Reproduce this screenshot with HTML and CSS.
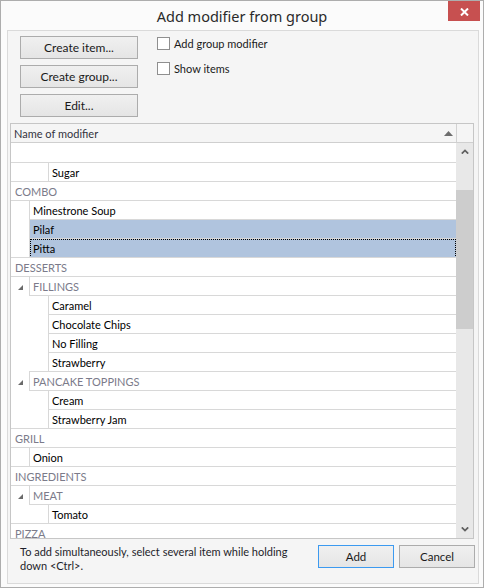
FILE: index.html
```html
<!DOCTYPE html>
<html>
<head>
<meta charset="utf-8">
<title>Add modifier from group</title>
<link rel="stylesheet" href="styles.css">
</head>
<body>
<div class="window">
  <div class="titlebar">
    <span></span>
    <div class="title">Add modifier from group</div>
    <div class="close"><svg width="9" height="8" viewBox="0 0 9 8"><path d="M1 0.5 L8 7.5 M8 0.5 L1 7.5" stroke="#fff" stroke-width="2"/></svg></div>
  </div>
  <div class="panel">
    <div class="top">
      <div class="btns">
        <button class="btn">Create item...</button>
        <button class="btn">Create group...</button>
        <button class="btn">Edit...</button>
      </div>
      <div class="checks">
        <label class="chk"><span class="box"></span><span>Add group modifier</span></label>
        <label class="chk"><span class="box"></span><span>Show items</span></label>
      </div>
    </div>
    <div class="grid">
      <div class="ghead">
        <div class="hcell"><span>Name of modifier</span><svg class="sort" width="9" height="5" viewBox="0 0 9 5"><polygon points="4.5,0 9,5 0,5" fill="#6d6d6d"/></svg></div>
        <div class="hcorner"></div>
      </div>
      <div class="gbody">
        <div class="rows">
          <div class="row first"><div class="cell"></div></div>
          <div class="row"><div class="ind l2"></div><div class="cell">Sugar</div></div>
          <div class="row"><div class="cell grp">COMBO</div></div>
          <div class="row"><div class="ind l1"></div><div class="cell">Minestrone Soup</div></div>
          <div class="row"><div class="ind l1"></div><div class="cell sel">Pilaf</div></div>
          <div class="row"><div class="ind l1"></div><div class="cell sel focus">Pitta</div></div>
          <div class="row"><div class="cell grp">DESSERTS</div></div>
          <div class="row"><div class="ind l1 exp"><svg width="5" height="5" viewBox="0 0 5 5"><polygon points="5,0 5,5 0,5" fill="#6a6a6a"/></svg></div><div class="cell grp">FILLINGS</div></div>
          <div class="row"><div class="ind l2"></div><div class="cell">Caramel</div></div>
          <div class="row"><div class="ind l2"></div><div class="cell">Chocolate Chips</div></div>
          <div class="row"><div class="ind l2"></div><div class="cell">No Filling</div></div>
          <div class="row"><div class="ind l2"></div><div class="cell">Strawberry</div></div>
          <div class="row"><div class="ind l1 exp"><svg width="5" height="5" viewBox="0 0 5 5"><polygon points="5,0 5,5 0,5" fill="#6a6a6a"/></svg></div><div class="cell grp">PANCAKE TOPPINGS</div></div>
          <div class="row"><div class="ind l2"></div><div class="cell">Cream</div></div>
          <div class="row"><div class="ind l2"></div><div class="cell">Strawberry Jam</div></div>
          <div class="row"><div class="cell grp">GRILL</div></div>
          <div class="row"><div class="ind l1"></div><div class="cell">Onion</div></div>
          <div class="row"><div class="cell grp">INGREDIENTS</div></div>
          <div class="row"><div class="ind l1 exp"><svg width="5" height="5" viewBox="0 0 5 5"><polygon points="5,0 5,5 0,5" fill="#6a6a6a"/></svg></div><div class="cell grp">MEAT</div></div>
          <div class="row"><div class="ind l2"></div><div class="cell">Tomato</div></div>
          <div class="row"><div class="cell grp">PIZZA</div></div>
        </div>
        <div class="vscroll">
          <div class="arrow"><svg width="8" height="5" viewBox="0 0 8 5"><polyline points="0.8,4.6 4,1.4 7.2,4.6" fill="none" stroke="#606060" stroke-width="1.8"/></svg></div>
          <div class="track-top"></div>
          <div class="thumb"></div>
          <div class="track-rest"></div>
          <div class="arrow"><svg width="8" height="5" viewBox="0 0 8 5"><polyline points="0.8,0.4 4,3.6 7.2,0.4" fill="none" stroke="#606060" stroke-width="1.8"/></svg></div>
        </div>
      </div>
    </div>
    <div class="bottom">
      <div class="hint">To add simultaneously, select several item while holding<br>down &lt;Ctrl&gt;.</div>
      <div class="actions">
        <button class="btn dlg default">Add</button>
        <button class="btn dlg">Cancel</button>
      </div>
    </div>
  </div>
</div>
</body>
</html>
```

FILE: styles.css
```css
html, body {
  margin: 0;
  padding: 0;
  background: #ffffff;
}

body {
  font-family: Lato, "Noto Sans", sans-serif;
  font-size: 11px;
  color: #1a1a1a;
}

.window {
  width: 484px;
  height: 588px;
  box-sizing: border-box;
  border: 1px solid #adadad;
  background: #fbfbfb;
  display: flex;
  flex-direction: column;
}

.titlebar {
  flex: none;
  height: 29px;
  display: grid;
  grid-template-columns: 1fr auto 1fr;
  align-items: start;
}

.title {
  font-family: "Noto Sans", sans-serif;
  font-size: 14.5px;
  line-height: 31px;
  color: #2a2a2a;
  white-space: nowrap;
}

.close {
  justify-self: end;
  width: 32px;
  height: 20px;
  margin-right: 3px;
  background: #c75050;
  display: flex;
  align-items: center;
  justify-content: center;
}

.close svg {
  display: block;
  margin-top: 1px;
}

.panel {
  flex: 1;
  min-height: 0;
  margin: 0 4px 3px 6px;
  border: 1px solid #dadada;
  background: #f5f5f5;
  padding: 5px 4px 0 2px;
  display: flex;
  flex-direction: column;
}

.top {
  display: flex;
  padding-left: 10px;
  margin-bottom: 6px;
}

.btns {
  display: flex;
  flex-direction: column;
  gap: 6px;
}

.btn {
  font-family: inherit;
  font-size: 12px;
  color: #1a1a1a;
  height: 23px;
  width: 118px;
  padding: 0;
  margin: 0;
  border: 1px solid #acacac;
  background: linear-gradient(#f0f0f0, #e5e5e5);
  border-radius: 0;
  line-height: 20px;
}

.checks {
  margin-left: 19px;
  padding-top: 1px;
  display: flex;
  flex-direction: column;
  gap: 12px;
  font-size: 11px;
}

.chk {
  display: flex;
  align-items: center;
  height: 13px;
  gap: 4px;
  white-space: nowrap;
}

.box {
  width: 13px;
  height: 13px;
  box-sizing: border-box;
  border: 1px solid #8f8f8f;
  background: #ffffff;
  flex: none;
}

.grid {
  height: 416px;
  box-sizing: border-box;
  border: 1px solid #c6c6c6;
  background: #ffffff;
  display: flex;
  flex-direction: column;
  flex: none;
}

.ghead {
  flex: none;
  display: flex;
  height: 19px;
  box-sizing: border-box;
  border-bottom: 1px solid #cfcfcf;
  background: #f5f5f5;
}

.hcell {
  flex: 1;
  border-right: 1px solid #d2d2d2;
  display: flex;
  align-items: center;
  justify-content: space-between;
  padding: 0 3px 0 3px;
  color: #333340;
  line-height: 19px;
}

.sort {
  display: block;
}

.hcorner {
  width: 16px;
  flex: none;
}

.gbody {
  flex: 1;
  min-height: 0;
  display: flex;
}

.rows {
  flex: 1;
  min-width: 0;
  overflow: hidden;
}

.row {
  display: flex;
  height: 19px;
}

.row.first {
  height: 20px;
}

.ind {
  flex: none;
  background: #ffffff;
  box-sizing: border-box;
  border-right: 1px solid #d8d8d8;
}

.ind.l1 {
  width: 19px;
}

.ind.l2 {
  width: 38px;
}

.ind.exp {
  display: flex;
  justify-content: center;
  align-items: flex-start;
  padding-top: 8px;
  padding-left: 1px;
}

.ind.exp svg {
  display: block;
}

.cell {
  flex: 1;
  min-width: 0;
  box-sizing: border-box;
  border-bottom: 1px solid #d8d8d8;
  box-shadow: 0 -1px 0 #d8d8d8;
  padding-left: 4px;
  line-height: 19px;
  white-space: nowrap;
  color: #000000;
  background: #ffffff;
}

.ind + .cell {
  padding-left: 3px;
  box-shadow: -1px -1px 0 #d8d8d8;
}

.row.first .cell {
  box-shadow: none;
}

.cell.grp {
  color: #7b7b8a;
}

.cell.sel {
  background: #b0c4de;
}

.cell.focus {
  outline: 1px dotted #000000;
  outline-offset: -1px;
}

.vscroll {
  width: 17px;
  flex: none;
  background: #e8e8e8;
  display: flex;
  flex-direction: column;
}

.arrow {
  height: 17px;
  flex: none;
  display: flex;
  align-items: center;
  justify-content: center;
}

.arrow svg {
  display: block;
}

.track-top {
  height: 30px;
  flex: none;
}

.thumb {
  height: 139px;
  flex: none;
  background: #cdcdcd;
}

.track-rest {
  flex: 1;
}

.bottom {
  flex: 1;
  display: flex;
  justify-content: space-between;
  margin-right: -4px;
  padding: 0 3px 0 10px;
}

.hint {
  margin-top: 6px;
  line-height: 14px;
  color: #1e1e2a;
  white-space: nowrap;
}

.actions {
  flex: none;
  display: flex;
  gap: 5px;
  margin-top: 6px;
}

.btn.dlg {
  width: 76px;
  font-size: 11.5px;
}

.btn.default {
  border-color: #3c9af0;
}
```
